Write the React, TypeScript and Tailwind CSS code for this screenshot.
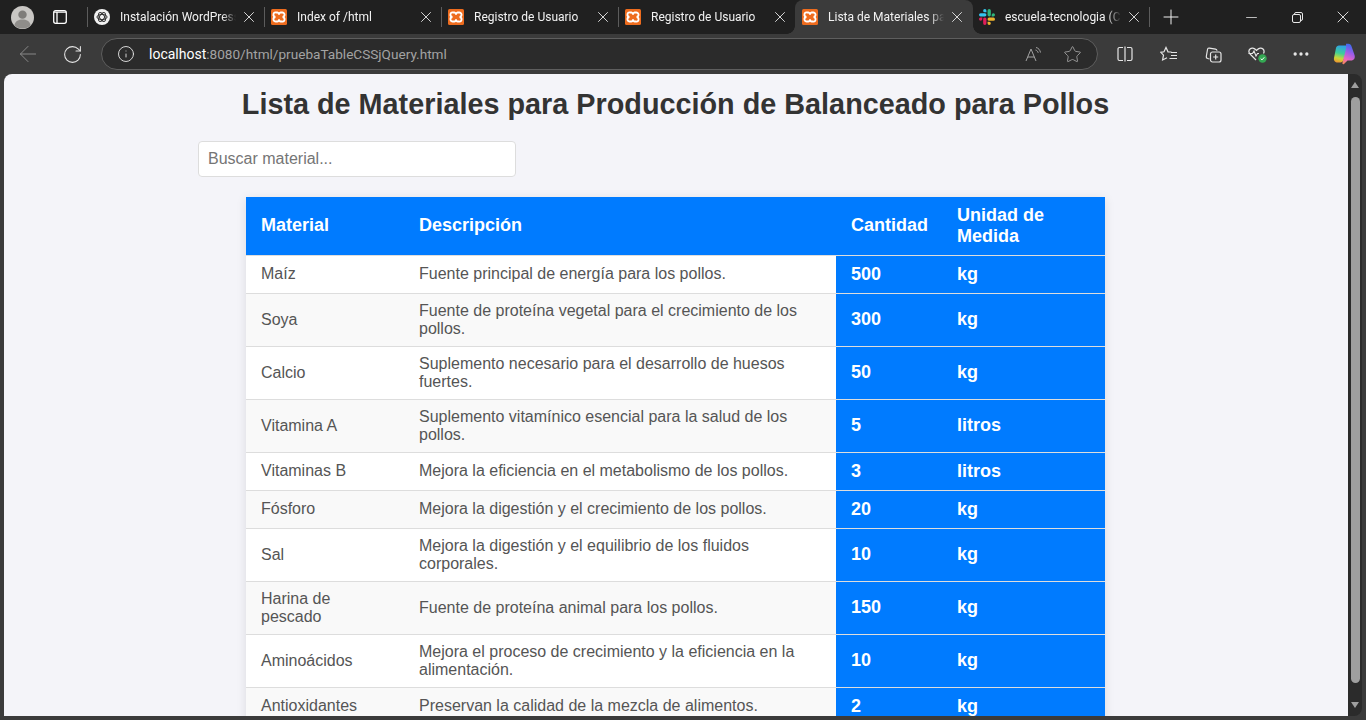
import { ArrowLeft, RotateCw, Info, Star, X, Plus, Minus, MoreHorizontal } from 'lucide-react';

const tabs = [
  { title: 'Instalación WordPress', icon: 'gpt' },
  { title: 'Index of /html', icon: 'xampp' },
  { title: 'Registro de Usuario', icon: 'xampp' },
  { title: 'Registro de Usuario', icon: 'xampp' },
  { title: 'Lista de Materiales para Producción', icon: 'xampp', active: true },
  { title: 'escuela-tecnologia (Canal)', icon: 'slack' },
];

const rows = [
  ['Maíz', 'Fuente principal de energía para los pollos.', '500', 'kg'],
  ['Soya', 'Fuente de proteína vegetal para el crecimiento de los pollos.', '300', 'kg'],
  ['Calcio', 'Suplemento necesario para el desarrollo de huesos fuertes.', '50', 'kg'],
  ['Vitamina A', 'Suplemento vitamínico esencial para la salud de los pollos.', '5', 'litros'],
  ['Vitaminas B', 'Mejora la eficiencia en el metabolismo de los pollos.', '3', 'litros'],
  ['Fósforo', 'Mejora la digestión y el crecimiento de los pollos.', '20', 'kg'],
  ['Sal', 'Mejora la digestión y el equilibrio de los fluidos corporales.', '10', 'kg'],
  ['Harina de pescado', 'Fuente de proteína animal para los pollos.', '150', 'kg'],
  ['Aminoácidos', 'Mejora el proceso de crecimiento y la eficiencia en la alimentación.', '10', 'kg'],
  ['Antioxidantes', 'Preservan la calidad de la mezcla de alimentos.', '2', 'kg'],
];

function XamppIcon() {
  return (
    <svg width="16" height="16" viewBox="0 0 16 16" className="shrink-0">
      <rect width="16" height="16" rx="1.5" fill="#ee6c1e" />
      <path
        d="M5 3.5h1.5c1 0 1.3 1.2 1.5 2 .2-.8.5-2 1.5-2H11a2.2 2.2 0 0 1 .6 4.5A2.2 2.2 0 0 1 11 12.5H9.5c-1 0-1.3-1.2-1.5-2-.2.8-.5 2-1.5 2H5A2.2 2.2 0 0 1 4.4 8 2.2 2.2 0 0 1 5 3.5Z"
        fill="none"
        stroke="#fff"
        strokeWidth="1.8"
      />
    </svg>
  );
}

function GptIcon() {
  return (
    <svg width="16" height="16" viewBox="0 0 16 16" className="shrink-0">
      <circle cx="8" cy="8" r="8" fill="#f1f1f1" />
      <g fill="none" stroke="#333" strokeWidth="1">
        <ellipse cx="8" cy="8" rx="5" ry="2.5" />
        <ellipse cx="8" cy="8" rx="5" ry="2.5" transform="rotate(60 8 8)" />
        <ellipse cx="8" cy="8" rx="5" ry="2.5" transform="rotate(120 8 8)" />
      </g>
    </svg>
  );
}

function SlackIcon() {
  return (
    <svg width="16" height="16" viewBox="0 0 16 16" className="shrink-0">
      <path d="M3.3 10.1a1.65 1.65 0 1 1-1.65-1.65H3.3ZM4.15 10.1a1.65 1.65 0 0 1 3.3 0v4.25a1.65 1.65 0 0 1-3.3 0Z" fill="#e01e5a" />
      <path d="M5.8 3.3a1.65 1.65 0 1 1 1.65-1.65V3.3ZM5.8 4.15a1.65 1.65 0 0 1 0 3.3H1.65a1.65 1.65 0 0 1 0-3.3Z" fill="#36c5f0" />
      <path d="M12.7 5.8a1.65 1.65 0 1 1 1.65 1.65H12.7ZM11.85 5.8a1.65 1.65 0 0 1-3.3 0V1.65a1.65 1.65 0 0 1 3.3 0Z" fill="#2eb67d" />
      <path d="M10.2 12.7a1.65 1.65 0 1 1-1.65 1.65V12.7ZM10.2 11.85a1.65 1.65 0 0 1 0-3.3h4.15a1.65 1.65 0 0 1 0 3.3Z" fill="#ecb22e" />
    </svg>
  );
}

function Tab({ title, icon, active, narrow }: { title: string; icon: string; active?: boolean; narrow?: boolean }) {
  return (
    <div
      className={`relative flex h-full shrink-0 items-center ${
        active
          ? '-ml-px w-[178px] rounded-t-lg bg-[#3b3b3b] pl-[7px]'
          : narrow
            ? 'w-[176px] pl-[6px]'
            : 'w-[177px] pl-[6px]'
      }`}
    >
      {active && (
        <>
          <span className="absolute bottom-0 left-[-8px] h-2 w-2 bg-[radial-gradient(circle_at_0_0,#202020_7.5px,#3b3b3b_8px)]" />
          <span className="absolute bottom-0 right-[-8px] h-2 w-2 bg-[radial-gradient(circle_at_100%_0,#202020_7.5px,#3b3b3b_8px)]" />
        </>
      )}
      {icon === 'gpt' && <GptIcon />}
      {icon === 'xampp' && <XamppIcon />}
      {icon === 'slack' && <SlackIcon />}
      <span className="ml-[10px] w-[116px] overflow-hidden whitespace-nowrap text-[12px] text-[#f2f2f2] [mask-image:linear-gradient(to_right,#000_88%,transparent)]">
        {title}
      </span>
      <X size={18} strokeWidth={1.2} className="ml-[4px] shrink-0 text-[#e8e8e8]" />
    </div>
  );
}

function TabSeparator() {
  return <span className="h-[20px] w-px shrink-0 bg-[#5c5c5c]" />;
}

function TabStrip() {
  return (
    <div className="flex h-[34px] shrink-0 items-center bg-[#202020]">
      <div className="flex w-[44px] justify-center">
        <svg width="23" height="23" viewBox="0 0 24 24">
          <circle cx="12" cy="12" r="12" fill="#c9c7c4" />
          <circle cx="12" cy="9" r="4.4" fill="#7f7d7a" />
          <path d="M3.5 20c1-4.5 4.5-6 8.5-6s7.5 1.5 8.5 6a12 12 0 0 1-17 0Z" fill="#8f8d8a" />
        </svg>
      </div>
      <div className="flex w-[32px] justify-center">
        <svg width="16" height="16" viewBox="0 0 16 16" fill="none" stroke="#fff" strokeWidth="1.3">
          <rect x="1.7" y="1.7" width="12.6" height="12.6" rx="2" />
          <path d="M5 3v11M2 3.2h12" />
        </svg>
      </div>
      <div className="ml-[11px] flex h-full items-center">
        <TabSeparator />
        {tabs.map((t, i) => (
          <div key={i} className="flex h-full items-center">
            <Tab title={t.title} icon={t.icon} active={t.active} narrow={i < 3 || i === 5} />
            {(i < 3 || i === 5) && <TabSeparator />}
          </div>
        ))}
      </div>
      <div className="ml-[5px] flex w-[32px] justify-center">
        <Plus size={24} strokeWidth={1} className="text-[#f0f0f0]" />
      </div>
      <div className="ml-auto flex h-full items-center text-[#e8e8e8]">
        <div className="flex w-[46px] justify-center"><Minus size={17} strokeWidth={1.1} /></div>
        <div className="flex w-[46px] justify-center">
          <svg width="11" height="11" viewBox="0 0 11 11" fill="none" stroke="currentColor" strokeWidth="1">
            <rect x="0.5" y="2.5" width="8" height="8" rx="1.5" />
            <path d="M2.5 2.5V2A1.5 1.5 0 0 1 4 .5h5A1.5 1.5 0 0 1 10.5 2v5A1.5 1.5 0 0 1 9 8.5h-.5" />
          </svg>
        </div>
        <div className="flex w-[46px] justify-center"><X size={20} strokeWidth={1.1} /></div>
      </div>
    </div>
  );
}

function ToolbarButton({ children }: { children: React.ReactNode }) {
  return <div className="flex h-full w-[44px] shrink-0 items-center justify-center text-[#e6e6e6]">{children}</div>;
}

function Toolbar() {
  return (
    <div className="flex h-[40px] shrink-0 items-center bg-[#3b3b3b] pl-[6px]">
      <ToolbarButton><ArrowLeft size={26} strokeWidth={0.9} className="text-[#8a8a8a]" /></ToolbarButton>
      <ToolbarButton><RotateCw size={21} strokeWidth={1.2} /></ToolbarButton>
      <div className="ml-[7px] flex h-[32px] w-[997px] shrink-0 items-center rounded-full border border-[#5e5e5e] bg-[#2b2b2b] pl-[15px]">
        <Info size={18} strokeWidth={1.2} className="shrink-0 text-[#e6e6e6]" />
        <span className="ml-[14px] whitespace-nowrap text-[13.6px] text-[#a3a3a3]">
          <span className="text-[14px] text-white">localhost</span>:8080/html/pruebaTableCSSjQuery.html
        </span>
        <div className="ml-auto flex items-center pr-[15px] text-[#a3a3a3]">
          <svg width="18" height="16" viewBox="0 0 18 16" fill="none" stroke="currentColor" strokeWidth="1">
            <path d="M1 15 6 3l5 12M2.8 11h6.4" />
            <path d="M11 1.5c2.5.5 4 2.5 4.5 5M10.5 4c1.3.3 2.3 1.3 2.7 2.8" />
          </svg>
          <Star size={19} strokeWidth={1.1} className="ml-[20px]" />
        </div>
      </div>
      <div className="ml-[5px] flex h-full items-center">
        <ToolbarButton>
          <svg width="16" height="16" viewBox="0 0 16 16" fill="none" stroke="currentColor" strokeWidth="1.2">
            <path d="M6 1.5H2.5A1.5 1.5 0 0 0 1 3v10a1.5 1.5 0 0 0 1.5 1.5H6M8 .5v15M10 1.5h3.5A1.5 1.5 0 0 1 15 3v10a1.5 1.5 0 0 1-1.5 1.5H10" />
          </svg>
        </ToolbarButton>
        <ToolbarButton>
          <svg width="18" height="16" viewBox="0 0 18 16" fill="none" stroke="currentColor" strokeWidth="1.2">
            <path d="M11.5 6 8 5.8 6 1.5 4 5.8.8 6.3l2.7 2.9-.9 4.8L7 11.8" />
            <path d="M11 6.5h6M11 9.5h6M9.5 12.5H17" />
          </svg>
        </ToolbarButton>
        <ToolbarButton>
          <svg width="17" height="17" viewBox="0 0 17 17" fill="none" stroke="currentColor" strokeWidth="1.2">
            <path d="M4.5 13 2.6 12.5c-1-.3-1.5-1-1.3-2L2.5 3.5c.2-1 1-1.6 2-1.4L10.500 3.200c.8.2 1.400.7 1.500 1.500" />
            <rect x="5.5" y="6" width="10.5" height="10" rx="2" />
            <path d="M10.7 8.5v5M8.2 11h5" />
          </svg>
        </ToolbarButton>
        <ToolbarButton>
          <svg width="20" height="20" viewBox="0 0 20 20" fill="none">
            <path d="M9 16 3.5 10.5C1.8 8.8 1.5 6.500 3 5c1.600-1.500 4-1.200 5.500.5l1 1 1-1C12 3.800 14.500 3.500 16 5c1.200 1.200 1.300 3 .5 4.500" stroke="currentColor" strokeWidth="1.2" />
            <path d="M1.5 9.5h4L7 7l2 5 1.500-2.500H12" stroke="currentColor" strokeWidth="1.1" />
            <circle cx="15.5" cy="14.5" r="4.2" fill="#34a853" />
            <path d="m13.7 14.600 1.300 1.300 2.300-2.600" stroke="#fff" strokeWidth="1" />
          </svg>
        </ToolbarButton>
        <ToolbarButton><MoreHorizontal size={20} strokeWidth={2} /></ToolbarButton>
        <ToolbarButton>
          <svg width="23" height="22" viewBox="0 0 23 22" className="mr-[2px]">
            <defs>
              <linearGradient id="copilotLeft" x1="0.5" y1="0" x2="0.3" y2="1">
                <stop offset="0" stopColor="#2f9fe8" />
                <stop offset="0.45" stopColor="#3fcf98" />
                <stop offset="0.75" stopColor="#c8d83a" />
                <stop offset="1" stopColor="#f0962e" />
              </linearGradient>
              <linearGradient id="copilotRight" x1="0.7" y1="0" x2="0.4" y2="1">
                <stop offset="0" stopColor="#2f6cf0" />
                <stop offset="0.45" stopColor="#a05ce8" />
                <stop offset="0.8" stopColor="#ea68c0" />
                <stop offset="1" stopColor="#f58468" />
              </linearGradient>
            </defs>
            <path d="M6 2.5h7.5c1.500 0 2 1 1.500 2.300L10.500 17c-.6 1.500-1.500 2.500-3 2.500H5c-3 0-4.500-2-4-4.500L3 5c.3-1.500 1.500-2.500 3-2.500Z" fill="url(#copilotLeft)" />
            <path d="M13 .8h2.500c1.500 0 2.500 1 3 2.500L21.500 12c1 3-.5 5.500-3.500 5.500h-3.500L11 21c-1 .5-2 0-1.500-1.500L13 6c.5-2 0-3 0-5.200Z" fill="url(#copilotRight)" />
          </svg>
        </ToolbarButton>
      </div>
    </div>
  );
}

function MaterialsTable() {
  return (
    <table className="mx-auto mt-5 w-[859px] table-fixed border-collapse bg-white text-[16px] leading-[normal] text-[#555] shadow-[0_2px_10px_rgba(0,0,0,0.1)]">
      <colgroup>
        <col className="w-[158px]" />
        <col className="w-[432px]" />
        <col className="w-[106px]" />
        <col className="w-[163px]" />
      </colgroup>
      <thead>
        <tr className="bg-[#007bff] text-left text-[18px] font-bold text-white">
          <th className="border-b border-[#ddd] px-[15px] pb-[8.5px] pt-[7.5px]">Material</th>
          <th className="border-b border-[#ddd] px-[15px] pb-[8.5px] pt-[7.5px]">Descripción</th>
          <th className="border-b border-[#ddd] px-[15px] pb-[8.5px] pt-[7.5px]">Cantidad</th>
          <th className="border-b border-[#ddd] px-[15px] pb-[8.5px] pt-[7.5px]">Unidad de Medida</th>
        </tr>
      </thead>
      <tbody>
        {rows.map((r, i) => (
          <tr key={r[0]} className={i % 2 === 1 ? 'bg-[#f9f9f9]' : 'bg-white'}>
            <td className="border-b border-[#ddd] px-[15px] pb-[8.5px] pt-[7.5px]">{r[0]}</td>
            <td className="border-b border-[#ddd] px-[15px] pb-[8.5px] pt-[7.5px]">{r[1]}</td>
            <td className="border-b border-[#ddd] bg-[#007bff] px-[15px] pb-[8.5px] pt-[7.5px] text-[18px] font-bold text-white">{r[2]}</td>
            <td className="border-b border-[#ddd] bg-[#007bff] px-[15px] pb-[8.5px] pt-[7.5px] text-[18px] font-bold text-white">{r[3]}</td>
          </tr>
        ))}
      </tbody>
    </table>
  );
}

function Scrollbar() {
  return (
    <div className="flex w-[14px] shrink-0 flex-col items-center bg-[#2b2b2b] py-[8px]">
      <span className="h-0 w-0 border-x-[4.5px] border-b-[6px] border-x-transparent border-b-[#9f9f9f]" />
      <span className="mt-[9px] h-[586px] w-[9px] rounded-full bg-[#9f9f9f]" />
      <span className="mt-auto h-0 w-0 border-x-[4.5px] border-t-[6px] border-x-transparent border-t-[#9f9f9f]" />
    </div>
  );
}

export default function App() {
  return (
    <div className="flex h-[720px] w-[1366px] flex-col overflow-hidden bg-[#3b3b3b] font-['Roboto','Noto_Sans',sans-serif]">
      <TabStrip />
      <Toolbar />
      <div className="flex min-h-0 flex-1 px-[4px] pb-[4px]">
        <main className="min-w-0 flex-1 overflow-hidden rounded-tl-lg bg-[#f4f4f9] pr-px font-['Liberation_Sans',Arial,sans-serif] text-[#333]">
          <h1 className="mt-[14px] text-center text-[28.8px] font-bold leading-[33px]">
            Lista de Materiales para Producción de Balanceado para Pollos
          </h1>
          <div className="mx-auto mt-[20px] w-[955px]">
            <input
              type="text"
              placeholder="Buscar material..."
              className="block h-[36px] w-[318px] rounded border border-[#ddd] bg-white px-[9px] text-[16px] text-[#555] outline-none placeholder:text-[#757575]"
            />
            <MaterialsTable />
          </div>
        </main>
        <div className="flex overflow-hidden rounded-r-lg">
          <Scrollbar />
        </div>
      </div>
    </div>
  );
}
